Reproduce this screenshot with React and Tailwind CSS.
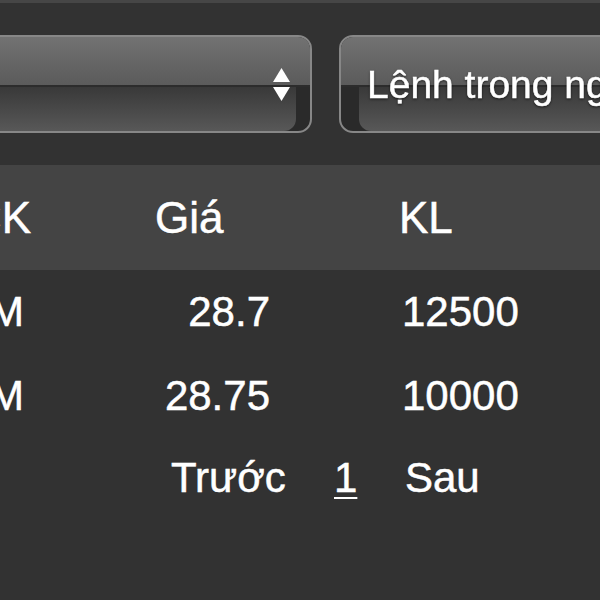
import { useState } from 'react'

const rows = [
  { code: 'DPM', price: '28.7', vol: '12500' },
  { code: 'DPM', price: '28.75', vol: '10000' },
]

function GlossSelect({ side = 'right', className = '', children }) {
  return (
    <div
      className={`relative h-[98px] shrink-0 overflow-hidden rounded-[14px] border-2 border-[#878787] bg-[#2a2a2a] ${className}`}
    >
      {/* Gloss */}
      <div className="flex h-full flex-col">
        <div className="h-[48px] bg-gradient-to-b from-[#727272] to-[#5b5b5b]" />
        <div className="h-[2px] bg-[#2c2c2c]" />
        <div
          className={`flex-1 bg-gradient-to-b from-[#393939] to-[#585858] ${
            side === 'right' ? 'mr-[14px] rounded-br-[12px]' : 'ml-[18px] rounded-bl-[12px]'
          }`}
        />
      </div>

      <div className="absolute inset-0 flex items-center">{children}</div>
    </div>
  )
}

export default function App() {
  const [page] = useState(1)

  return (
    <div className="h-[600px] w-[600px] overflow-hidden bg-[#323232] font-['Liberation_Sans',Arial,sans-serif] text-white [-webkit-text-stroke:0.5px_#fff]">
      <div className="h-[3px] bg-[#464646]" />

      {/* Selects */}
      <div className="mt-[32px] -ml-[40px] flex gap-[27px]">
        <GlossSelect side="right" className="w-[352px]">
          <div className="ml-auto mr-[20px] flex flex-col gap-[5px]">
            <svg width="17" height="14" viewBox="0 0 17 14">
              <path d="M8.5 0 L17 14 L0 14 Z" fill="#fff" />
            </svg>
            <svg width="17" height="14" viewBox="0 0 17 14">
              <path d="M0 0 L17 0 L8.5 14 Z" fill="#fff" />
            </svg>
          </div>
        </GlossSelect>

        <GlossSelect side="left" className="w-[320px]">
          <span className="ml-[26px] whitespace-nowrap text-[39px] leading-none drop-shadow-[0_1px_1px_rgba(0,0,0,0.6)]">
            Lệnh trong ngày
          </span>
        </GlossSelect>
      </div>

      {/* Table header */}
      <div className="mt-[32px] flex h-[105px] items-center bg-[#444444] text-[44px] leading-none">
        <div className="flex w-[31px] shrink-0 justify-end whitespace-nowrap">Mã CK</div>
        <div className="ml-[124px] w-[244px] shrink-0">Giá</div>
        <div>KL</div>
      </div>

      {/* Rows */}
      {rows.map((r, i) => (
        <div key={i} className="flex h-[84px] items-center text-[42px] leading-none">
          <div className="flex w-[24px] shrink-0 justify-end whitespace-nowrap">{r.code}</div>
          <div className="w-[246px] shrink-0 text-right">{r.price}</div>
          <div className="pl-[132px]">{r.vol}</div>
        </div>
      ))}

      {/* Pager */}
      <div className="flex h-[80px] items-center pl-[171px] text-[42px] leading-none">
        <span className="w-[163px] shrink-0">Trước</span>
        <span className="w-[71px] shrink-0">
          <span className="underline decoration-2 underline-offset-[5px]">{page}</span>
        </span>
        <span>Sau</span>
      </div>
    </div>
  )
}
